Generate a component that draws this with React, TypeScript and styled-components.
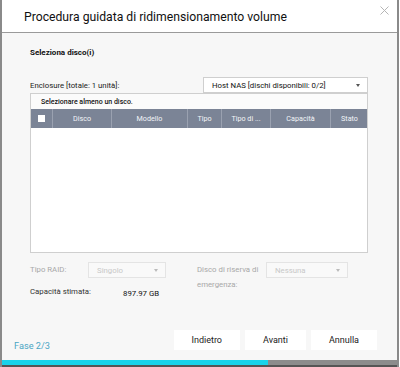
import React from "react";
import styled, { createGlobalStyle } from "styled-components";

const GlobalStyle = createGlobalStyle`
  html, body {
    margin: 0;
    padding: 0;
    background: #ffffff;
  }
  body {
    font-family: Roboto, "Liberation Sans", Arial, sans-serif;
    color: #333;
  }
  * {
    box-sizing: border-box;
  }
`;

const columns = [
  { key: "check", width: 21 },
  { key: "Disco", width: 59 },
  { key: "Modello", width: 76 },
  { key: "Tipo", width: 34 },
  { key: "Tipo di ...", width: 49 },
  { key: "Capacità", width: 60 },
  { key: "Stato", width: 38 },
];

function App() {
  return (
    <>
      <GlobalStyle />
      <Dialog>
        <Header>
          <Title>Procedura guidata di ridimensionamento volume</Title>
          <CloseButton aria-label="chiudi">
            <svg width="9" height="9" viewBox="0 0 9 9">
              <path d="M0.5 0.5L8.5 8.5M8.5 0.5L0.5 8.5" stroke="#b5b5b5" strokeWidth="1" />
            </svg>
          </CloseButton>
        </Header>

        <Body>
          <SectionTitle>Seleziona disco(i)</SectionTitle>

          <EnclosureRow>
            <Label>Enclosure [totale: 1 unità]:</Label>
            <Select width={165}>
              <span>Host NAS [dischi disponibili: 0/2]</span>
              <Caret />
            </Select>
          </EnclosureRow>

          <Table>
            <Notice>Selezionare almeno un disco.</Notice>
            <HeadRow>
              {columns.map((c) =>
                c.key === "check" ? (
                  <HeadCell key={c.key}>
                    <CheckBox />
                  </HeadCell>
                ) : (
                  <HeadCell key={c.key}>{c.key}</HeadCell>
                )
              )}
            </HeadRow>
            <TableBody />
          </Table>

          <OptionsRow>
            <OptionLabel width={58}>Tipo RAID:</OptionLabel>
            <Select width={78} disabled>
              <span>Singolo</span>
              <Caret disabled />
            </Select>
            <SpareLabel>
              Disco di riserva di
              <br />
              emergenza:
            </SpareLabel>
            <Select width={82} disabled>
              <span>Nessuna</span>
              <Caret disabled />
            </Select>
          </OptionsRow>

          <CapacityRow>
            <CapacityLabel>Capacità stimata:</CapacityLabel>
            <CapacityValue>897.97 GB</CapacityValue>
          </CapacityRow>
        </Body>

        <Footer>
          <Step>Fase 2/3</Step>
          <Buttons>
            <Button>Indietro</Button>
            <Button>Avanti</Button>
            <Button>Annulla</Button>
          </Buttons>
        </Footer>

        <Progress>
          <ProgressFill style={{ width: `${(2 / 3) * 100 + 0.8}%` }} />
        </Progress>
      </Dialog>
    </>
  );
}

const Dialog = styled.div`
  width: 399px;
  height: 367px;
  display: flex;
  flex-direction: column;
  background: #f7f7f7;
  border-left: 2px solid #8a8a8a;
  border-right: 2px solid #8a8a8a;
`;

const Header = styled.div`
  height: 33px;
  flex: none;
  display: flex;
  align-items: center;
  justify-content: space-between;
  padding: 0 8px 0 22px;
  background: #ffffff;
  border-bottom: 1px solid #9a9a9a;
`;

const Title = styled.h1`
  margin: 0;
  font-size: 12.2px;
  font-weight: 400;
  color: #111;
  padding-top: 1px;
`;

const CloseButton = styled.button`
  border: 0;
  background: none;
  padding: 0;
  align-self: flex-start;
  margin-top: 6px;
  line-height: 0;
`;

const Body = styled.div`
  flex: 1;
  padding: 14px 0 0 28px;
`;

const SectionTitle = styled.div`
  font-size: 8px;
  font-weight: 700;
  line-height: 12px;
  color: #111;
`;

const EnclosureRow = styled.div`
  display: flex;
  align-items: center;
  justify-content: space-between;
  width: 338px;
  margin-top: 18px;
`;

const Label = styled.div`
  font-size: 7.8px;
  color: #222;
`;

const Select = styled.div<{ width: number; disabled?: boolean }>`
  width: ${({ width }) => width}px;
  height: 16px;
  display: flex;
  align-items: center;
  justify-content: space-between;
  padding: 0 7px 0 8px;
  background: ${({ disabled }) => (disabled ? "#f9f9f9" : "#ffffff")};
  border: 1px solid ${({ disabled }) => (disabled ? "#e4e4e4" : "#cfcfcf")};
  font-size: 7.8px;
  color: ${({ disabled }) => (disabled ? "#c8c8c8" : "#111")};
  white-space: nowrap;
`;

const Caret = styled.span<{ disabled?: boolean }>`
  width: 0;
  height: 0;
  border-left: 2.5px solid transparent;
  border-right: 2.5px solid transparent;
  border-top: 3px solid ${({ disabled }) => (disabled ? "#bbb" : "#555")};
`;

const Table = styled.div`
  width: 338px;
  border: 1px solid #cfcfcf;
  background: #ffffff;
`;

const Notice = styled.div`
  height: 15px;
  display: flex;
  align-items: center;
  padding-left: 10px;
  font-size: 7px;
  font-weight: 500;
  color: #111;
  background: #fbfbfb;
`;

const HeadRow = styled.div`
  display: grid;
  grid-template-columns: ${columns.map((c) => `${c.width}px`).join(" ")};
  height: 19px;
  background: #7b8496;
`;

const HeadCell = styled.div`
  display: flex;
  align-items: center;
  justify-content: center;
  font-size: 7.2px;
  color: #f2f4f8;
  border-left: 1px solid #9aa1b0;
  &:first-child {
    border-left: 0;
  }
`;

const CheckBox = styled.span`
  width: 7px;
  height: 7px;
  background: #ffffff;
`;

const TableBody = styled.div`
  height: 124px;
`;

const OptionsRow = styled.div`
  display: flex;
  align-items: flex-start;
  margin-top: 9px;
`;

const OptionLabel = styled.div<{ width: number }>`
  width: ${({ width }) => width}px;
  font-size: 7.8px;
  line-height: 15px;
  color: #a8a8a8;
`;

const SpareLabel = styled.div`
  width: 69px;
  margin-left: 31px;
  font-size: 7.8px;
  line-height: 15px;
  color: #a8a8a8;
  white-space: nowrap;
`;

const CapacityRow = styled.div`
  display: flex;
  align-items: center;
  margin-top: -8px;
  height: 15px;
`;

const CapacityLabel = styled.div`
  width: 93px;
  font-size: 7.8px;
  color: #333;
`;

const CapacityValue = styled.div`
  font-size: 7.8px;
  color: #111;
  padding-top: 3px;
`;

const Footer = styled.div`
  flex: none;
  display: flex;
  align-items: flex-end;
  justify-content: space-between;
  padding: 0 20px 10px 12px;
`;

const Step = styled.div`
  font-size: 9.2px;
  line-height: 12px;
  color: #4aa6c4;
  margin-bottom: -2px;
`;

const Buttons = styled.div`
  display: flex;
  gap: 5px;
`;

const Button = styled.button`
  height: 20px;
  padding: 0 18px;
  border: 0;
  background: #ffffff;
  font-family: inherit;
  font-size: 9px;
  color: #222;
`;

const Progress = styled.div`
  flex: none;
  height: 7px;
  background: #8c8c8c;
  border-bottom: 2px solid #555;
`;

const ProgressFill = styled.div`
  height: 5px;
  background: #19d3ea;
`;

export default App;
